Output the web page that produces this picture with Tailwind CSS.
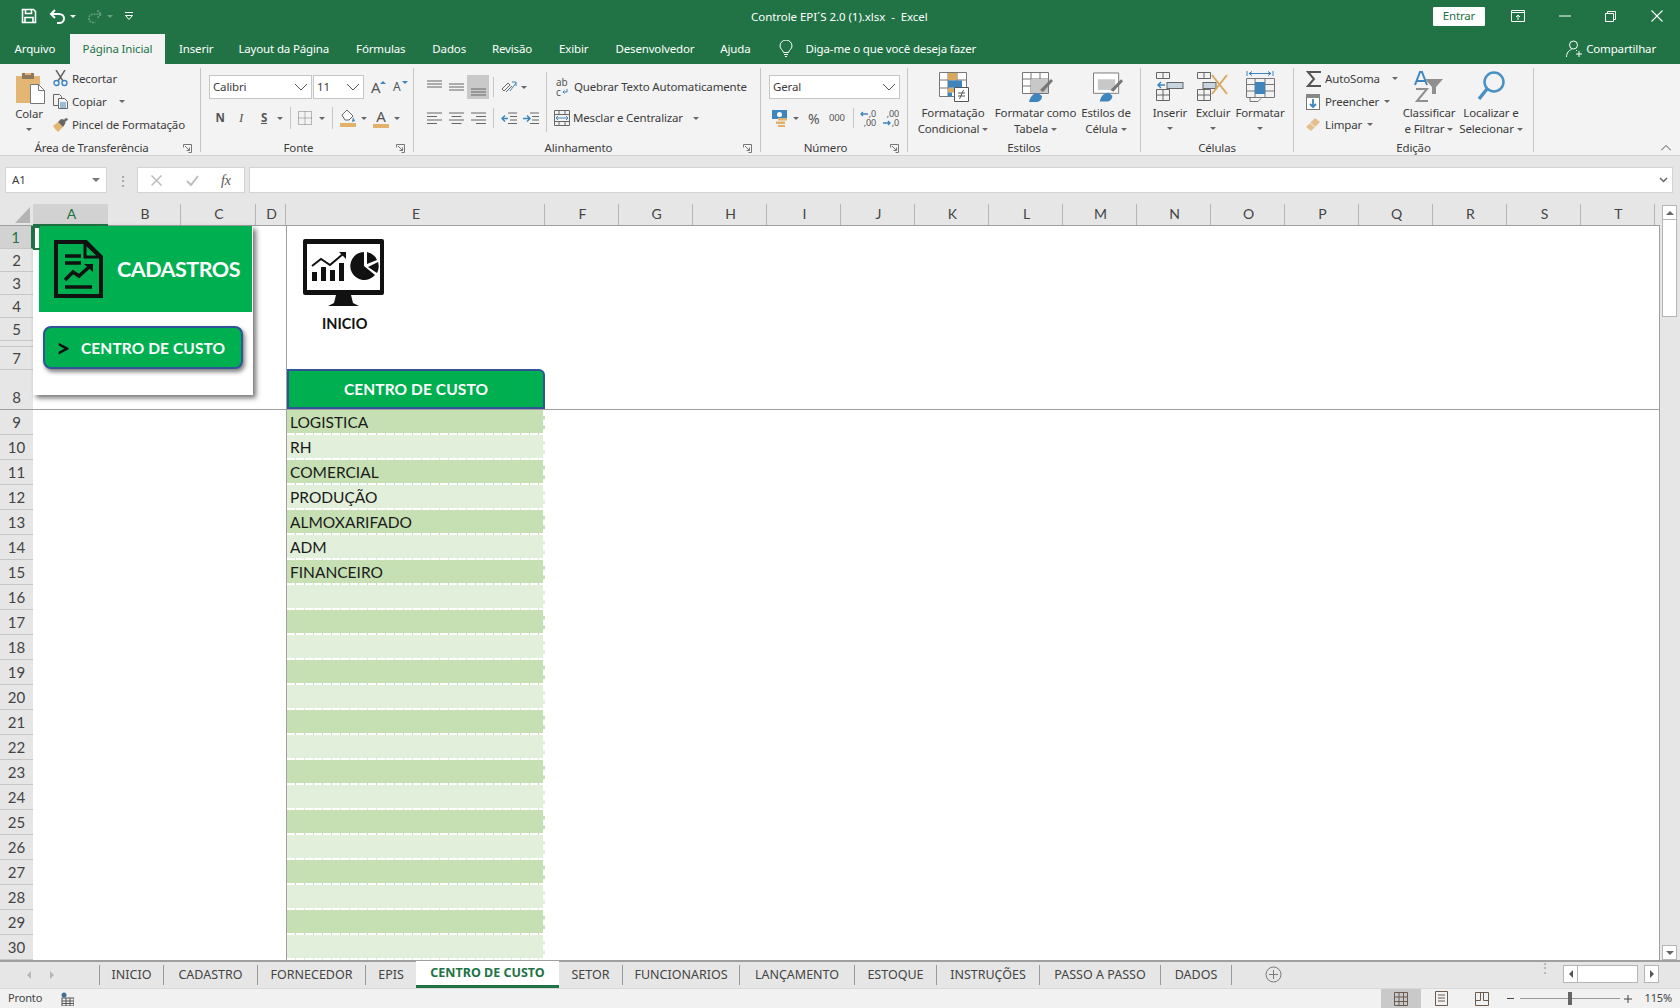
<!DOCTYPE html>
<html lang="pt">
<head>
<meta charset="UTF-8" />
<title>Controle EPI'S 2.0 (1).xlsx - Excel</title>
<script src="https://cdn.jsdelivr.net/npm/@tailwindcss/browser@4"></script>
</head>
<body class="w-[1680px] h-[1008px] overflow-hidden flex flex-col bg-white text-[11.5px] tracking-[-0.15px] text-[#3c3c3c] font-['Noto_Sans',sans-serif]">

<!-- barra de titulo -->
<header class="h-[32px] shrink-0 bg-[#217346] text-white flex items-center relative">
  <svg class="ml-[21px]" width="16" height="16" viewBox="0 0 16 16" fill="none" stroke="#fff" stroke-width="1.6"><path d="M1.5 1.5h11l2 2v11h-13z"/><path d="M4.5 1.5v4h6v-4M4 14.5v-5h8v5"/></svg>
  <svg class="ml-[12px]" width="17" height="15" viewBox="0 0 17 15" fill="none" stroke="#fff" stroke-width="2"><path d="M6 1L2 5l4 4"/><path d="M2 5h8c3 0 5 2 5 4.500S13 14 10 14H8"/></svg>
  <i class="ml-[4px] border-x-[3px] border-t-[3px] border-x-transparent border-t-white"></i>
  <svg class="ml-[11px]" width="16" height="15" viewBox="0 0 17 15" fill="none" stroke="#68a285" stroke-width="1.6" stroke-dasharray="2 1"><path d="M11 1l4 4-4 4"/><path d="M15 5H7C4 5 2 7 2 9.500S4 14 7 14h2"/></svg>
  <i class="ml-[4px] border-x-[3px] border-t-[3px] border-x-transparent border-t-[#68a285]"></i>
  <svg class="ml-[11px]" width="10" height="9" viewBox="0 0 10 9" fill="none" stroke="#fff"><path d="M1 .5h8"/><path d="M1.500 3.500L5 7.500l3.500-4z" fill="#217346"/></svg>
  <span class="absolute left-[751px] top-[8px] tracking-[-0.05px] whitespace-pre">Controle EPI´S 2.0 (1).xlsx  -  Excel</span>
  <span class="ml-auto w-[52px] h-[19px] bg-white text-[#217346] rounded-[1px] flex items-center justify-center">Entrar</span>
  <svg class="ml-[26px]" width="14" height="12" viewBox="0 0 14 12" fill="none" stroke="#fff"><path d="M.5.500h13v11H.5zM.5 2.500h13"/><path d="M7 10V5M5 7l2-2 2 2"/></svg>
  <svg class="ml-[34px]" width="12" height="2" viewBox="0 0 12 2" stroke="#fff"><path d="M0 1h12"/></svg>
  <svg class="ml-[34px]" width="11" height="11" viewBox="0 0 11 11" fill="none" stroke="#fff"><path d="M.5 2.500h8v8h-8zM2.500 2.500v-2h8v8h-2"/></svg>
  <svg class="ml-[35px] mr-[17px]" width="12" height="12" viewBox="0 0 12 12" stroke="#fff" stroke-width="1.100"><path d="M.5.500l11 11M11.500.500l-11 11"/></svg>
</header>

<!-- abas do ribbon -->
<nav class="h-[32px] shrink-0 bg-[#217346] text-white flex items-end">
  <span class="h-[30px] w-[70px] flex items-center justify-center">Arquivo</span>
  <span class="h-[30px] w-[95px] bg-[#f3f3f3] text-[#217346] flex items-center justify-center">Página Inicial</span>
  <span class="h-[30px] ml-[14px] flex items-center">Inserir</span>
  <span class="h-[30px] ml-[25px] flex items-center">Layout da Página</span>
  <span class="h-[30px] ml-[27px] flex items-center">Fórmulas</span>
  <span class="h-[30px] ml-[27px] flex items-center">Dados</span>
  <span class="h-[30px] ml-[26px] flex items-center">Revisão</span>
  <span class="h-[30px] ml-[27px] flex items-center">Exibir</span>
  <span class="h-[30px] ml-[27px] flex items-center">Desenvolvedor</span>
  <span class="h-[30px] ml-[26px] flex items-center">Ajuda</span>
  <svg class="ml-[28px] mb-[6px]" width="14" height="18" viewBox="0 0 14 18" fill="none" stroke="#fff"><path d="M4.500 12.500C4 10 1 9 1 6a6 6 0 0 1 12 0c0 3-3 4-3.500 6.500zM5 14.500h4M6 16.500h2"/></svg>
  <span class="h-[30px] ml-[13px] flex items-center">Diga-me o que você deseja fazer</span>
  <svg class="ml-auto mb-[6px]" width="17" height="18" viewBox="0 0 17 18" fill="none" stroke="#fff"><circle cx="7.500" cy="5" r="4"/><path d="M.5 17c0-4 2.500-7 5-7.500M10 10l1 1M13 11v6M10 14h6"/></svg>
  <span class="h-[30px] ml-[3px] mr-[24px] flex items-center">Compartilhar</span>
</nav>

<!-- ribbon -->
<section class="h-[92px] shrink-0 bg-[#f3f3f3] flex border-b border-[#d2d2d2] whitespace-nowrap">

  <!-- area de transferencia -->
  <div class="w-[201px] h-[84px] mt-[4px] shrink-0 border-r border-[#c6c6c6] flex flex-col">
    <div class="h-[72px] shrink-0 flex">
      <div class="ml-[9px] w-[40px] flex flex-col items-center">
        <svg class="mt-[5px] ml-[2px]" width="29" height="31" viewBox="0 0 29 31"><rect x="0" y="3" width="24" height="27" fill="#e3b773"/><rect x="6" y="0" width="12" height="6" fill="#8d7a5e"/><rect x="9" y="0" width="6" height="2" fill="#e3b773"/><path d="M14.500 11.500h8l6 6v13h-14z" fill="#fff" stroke="#777"/><path d="M22.500 11.500v6h6" fill="none" stroke="#777"/></svg>
        <span class="mt-[2px] h-[16px] leading-[16px]">Colar</span>
        <i class="mt-[6px] border-x-[3px] border-t-[3px] border-x-transparent border-t-[#666]"></i>
      </div>
      <div class="ml-[4px] -mt-[1px] flex flex-col">
        <div class="h-[23px] flex items-center gap-[4px]">
          <svg width="15" height="17" viewBox="0 0 15 17" fill="none"><path d="M3 0l7 11M12 0L5 11" stroke="#666" stroke-width="1.500"/><circle cx="3.500" cy="13" r="2.500" stroke="#3f85bd" stroke-width="1.400"/><circle cx="11.500" cy="13" r="2.500" stroke="#3f85bd" stroke-width="1.400"/></svg>
          <span>Recortar</span>
        </div>
        <div class="h-[23px] flex items-center gap-[4px]">
          <svg width="15" height="15" viewBox="0 0 15 15" fill="none" stroke="#666"><path d="M.5.500h6l2 2v9h-8z"/><path d="M5.500 4.500h6l3 3v7h-9z" fill="#f3f3f3"/><path d="M7 9h6M7 11h6M7 13h6" stroke="#3f85bd"/></svg>
          <span>Copiar</span>
          <i class="ml-[8px] border-x-[3px] border-t-[3px] border-x-transparent border-t-[#666]"></i>
        </div>
        <div class="h-[23px] flex items-center gap-[4px]">
          <svg width="15" height="14" viewBox="0 0 15 14"><path d="M0 8l5-4 5 5-5 5-2-2z" fill="#e3b773"/><path d="M5 4l3-3 5 1-1 4-2 3z" fill="#666"/><path d="M11 1l3-1 1 2-2 1z" fill="#666"/></svg>
          <span>Pincel de Formatação</span>
        </div>
      </div>
    </div>
    <div class="h-[16px] shrink-0 leading-[16px] flex"><span class="flex-1 text-center">Área de Transferência</span><span class="w-[17px] flex items-center"><svg width="9" height="9" viewBox="0 0 9 9" fill="none" stroke="#777"><path d="M.5 3.500V.5h8v8h-3M2 2l4.500 4.500M6.500 3.500v3h-3"/></svg></span></div>
  </div>

  <!-- fonte -->
  <div class="w-[213px] h-[84px] mt-[4px] shrink-0 border-r border-[#c6c6c6] flex flex-col">
    <div class="h-[72px] shrink-0 flex flex-col pt-[7px]">
      <div class="h-[24px] flex items-center pl-[8px]">
        <span class="w-[103px] h-[24px] bg-white border border-[#c6c6c6] flex items-center justify-between px-[3px]">Calibri<svg width="14" height="8" viewBox="0 0 14 8" fill="none" stroke="#555"><path d="M1 1l6 6 6-6"/></svg></span>
        <span class="w-[51px] h-[24px] ml-[1px] bg-white border border-[#c6c6c6] flex items-center justify-between px-[3px]">11<svg width="14" height="8" viewBox="0 0 14 8" fill="none" stroke="#555"><path d="M1 1l6 6 6-6"/></svg></span>
        <span class="ml-[7px] text-[15px] leading-[15px] w-[15px] relative text-[#555]">A<i class="absolute right-0 top-[1px] border-x-[3px] border-b-[3px] border-x-transparent border-b-[#3f85bd]"></i></span>
        <span class="ml-[7px] text-[12px] w-[15px] relative text-[#555]">A<i class="absolute right-0 top-[3px] border-x-[3px] border-t-[3px] border-x-transparent border-t-[#3f85bd]"></i></span>
      </div>
      <div class="h-[24px] mt-[7px] flex items-center pl-[12px]">
        <span class="w-[14px] text-center font-bold text-[#555]">N</span>
        <span class="w-[14px] ml-[7px] text-center italic font-['Liberation_Serif',serif] text-[13px] text-[#555]">I</span>
        <span class="w-[14px] ml-[9px] text-center font-bold underline text-[#555]">S</span>
        <i class="ml-[6px] border-x-[3px] border-t-[3px] border-x-transparent border-t-[#666]"></i>
        <i class="ml-[7px] w-px h-[22px] bg-[#c6c6c6]"></i>
        <svg class="ml-[7px]" width="14" height="14" viewBox="0 0 14 14" fill="none" stroke="#777" stroke-dasharray="1 1"><path d="M.5.500h13v13H.5zM7 .5v13M.5 7h13"/></svg>
        <i class="ml-[7px] border-x-[3px] border-t-[3px] border-x-transparent border-t-[#666]"></i>
        <i class="ml-[7px] w-px h-[22px] bg-[#c6c6c6]"></i>
        <svg class="ml-[7px]" width="16" height="18" viewBox="0 0 16 18"><path d="M2 6l5-5 6 6-4 4H5z" fill="#fff" stroke="#666"/><path d="M13 8l2 4-3 1z" fill="#3f85bd"/><rect y="14" width="16" height="4" fill="#e3b26a"/></svg>
        <i class="ml-[5px] border-x-[3px] border-t-[3px] border-x-transparent border-t-[#666]"></i>
        <span class="ml-[6px] w-[16px] text-center text-[15px] leading-[15px] border-b-[4px] border-[#e3b26a] text-[#555]">A</span>
        <i class="ml-[5px] border-x-[3px] border-t-[3px] border-x-transparent border-t-[#666]"></i>
      </div>
    </div>
    <div class="h-[16px] shrink-0 leading-[16px] flex"><span class="flex-1 text-center">Fonte</span><span class="w-[17px] flex items-center"><svg width="9" height="9" viewBox="0 0 9 9" fill="none" stroke="#777"><path d="M.5 3.500V.5h8v8h-3M2 2l4.500 4.500M6.500 3.500v3h-3"/></svg></span></div>
  </div>

  <!-- alinhamento -->
  <div class="w-[347px] h-[84px] mt-[4px] shrink-0 border-r border-[#c6c6c6] flex flex-col">
    <div class="h-[72px] shrink-0 flex">
      <div class="w-[132px] flex flex-col pt-[7px]">
        <div class="h-[24px] flex items-center pl-[13px]">
          <svg class="mb-[6px]" width="15" height="9" viewBox="0 0 15 9" stroke="#666"><path d="M0 1h15M0 4h15M0 7h15"/></svg>
          <svg class="ml-[7px]" width="15" height="9" viewBox="0 0 15 9" stroke="#666"><path d="M0 1h15M0 4h15M0 7h15"/></svg>
          <span class="ml-[3px] w-[22px] h-[24px] bg-[#c9c9c9] flex items-end justify-center pb-[2px]"><svg width="15" height="9" viewBox="0 0 15 9" stroke="#666"><path d="M0 1h15M0 4h15M0 7h15"/></svg></span>
          <i class="ml-[4px] w-px h-[20px] bg-[#c6c6c6]"></i>
          <svg class="ml-[7px]" width="16" height="16" viewBox="0 0 16 16" fill="none" stroke="#666"><path d="M1 10l6-6 2 2-6 6zM5 13l6-6"/><path d="M9 12l6-8M11 3h4v4" stroke="#3f85bd"/></svg>
          <i class="ml-[4px] border-x-[3px] border-t-[3px] border-x-transparent border-t-[#666]"></i>
        </div>
        <div class="h-[24px] mt-[7px] flex items-center pl-[13px]">
          <svg width="15" height="13" viewBox="0 0 15 13" stroke="#666"><path d="M0 1h15M0 4.500h10M0 8h15M0 11.500h10"/></svg>
          <svg class="ml-[7px]" width="15" height="13" viewBox="0 0 15 13" stroke="#666"><path d="M0 1h15M2.500 4.500h10M0 8h15M2.500 11.500h10"/></svg>
          <svg class="ml-[7px]" width="15" height="13" viewBox="0 0 15 13" stroke="#666"><path d="M0 1h15M5 4.500h10M0 8h15M5 11.500h10"/></svg>
          <i class="ml-[7px] w-px h-[20px] bg-[#c6c6c6]"></i>
          <svg class="ml-[7px]" width="16" height="13" viewBox="0 0 16 13" fill="none"><path d="M7 1h9M9 4.500h7M9 8h7M7 11.500h9" stroke="#666"/><path d="M7 6.500H1M4 3.500l-3 3 3 3" stroke="#3f85bd" stroke-width="1.500"/></svg>
          <svg class="ml-[6px]" width="16" height="13" viewBox="0 0 16 13" fill="none"><path d="M7 1h9M9 4.500h7M9 8h7M7 11.500h9" stroke="#666"/><path d="M0 6.500h7M4 3.500l3 3-3 3" stroke="#3f85bd" stroke-width="1.500"/></svg>
        </div>
      </div>
      <i class="w-px h-[60px] mt-[4px] bg-[#c6c6c6]"></i>
      <div class="flex flex-col pt-[7px]">
        <div class="h-[24px] flex items-center pl-[9px]">
          <span class="w-[16px] h-[20px] flex flex-col text-[10px] leading-[10px] text-[#555]">ab<span class="flex">c<svg class="ml-[1px] mt-[2px]" width="6" height="6" viewBox="0 0 6 6" fill="none" stroke="#3f85bd"><path d="M5 0v3H1M2.500 1.500L1 3l1.500 1.500"/></svg></span></span>
          <span class="ml-[2px]">Quebrar Texto Automaticamente</span>
        </div>
        <div class="h-[24px] mt-[7px] flex items-center pl-[7px]">
          <svg width="16" height="16" viewBox="0 0 16 16" fill="none" stroke="#666"><path d="M.5.500h15v15H.5zM.5 4.500h15M.5 11.500h15M5 .5v4M11 .5v4M5 11.500v4M11 11.500v4"/><path d="M2 8h12M4 6L2 8l2 2M12 6l2 2-2 2" stroke="#3f85bd"/></svg>
          <span class="ml-[3px]">Mesclar e Centralizar</span>
          <i class="ml-[10px] border-x-[3px] border-t-[3px] border-x-transparent border-t-[#666]"></i>
        </div>
      </div>
    </div>
    <div class="h-[16px] shrink-0 leading-[16px] flex"><span class="flex-1 text-center">Alinhamento</span><span class="w-[17px] flex items-center"><svg width="9" height="9" viewBox="0 0 9 9" fill="none" stroke="#777"><path d="M.5 3.500V.5h8v8h-3M2 2l4.500 4.500M6.500 3.500v3h-3"/></svg></span></div>
  </div>

  <!-- numero -->
  <div class="w-[147px] h-[84px] mt-[4px] shrink-0 border-r border-[#c6c6c6] flex flex-col">
    <div class="h-[72px] shrink-0 flex flex-col pt-[7px]">
      <div class="h-[24px] flex items-center pl-[8px]">
        <span class="w-[131px] h-[24px] bg-white border border-[#c6c6c6] flex items-center justify-between px-[3px]">Geral<svg width="14" height="8" viewBox="0 0 14 8" fill="none" stroke="#555"><path d="M1 1l6 6 6-6"/></svg></span>
      </div>
      <div class="h-[24px] mt-[7px] flex items-center pl-[11px]">
        <svg width="16" height="17" viewBox="0 0 16 17"><rect width="15" height="9" fill="#3f85bd"/><circle cx="7.500" cy="4.500" r="2.500" fill="#fff"/><rect x="6" y="8" width="9" height="2.500" fill="#e3b26a"/><rect x="4" y="11.500" width="9" height="2.500" fill="#e3b26a"/><rect x="6" y="15" width="7" height="2" fill="#e3b26a"/></svg>
        <i class="ml-[5px] border-x-[3px] border-t-[3px] border-x-transparent border-t-[#666]"></i>
        <span class="ml-[9px] w-[15px] text-[14px] leading-[15px] text-[#555]">%</span>
        <span class="ml-[6px] w-[18px] text-[9.500px] text-[#555]">000</span>
        <i class="ml-[6px] w-px h-[20px] bg-[#c6c6c6]"></i>
        <span class="ml-[6px] w-[16px] flex flex-col text-[9px] leading-[9px] text-[#555] items-end"><span class="flex items-center"><svg class="mr-[1px]" width="8" height="6" viewBox="0 0 8 6" fill="none" stroke="#3f85bd" stroke-width="1.300"><path d="M8 3H1M3 1L1 3l2 2"/></svg>,0</span><span>,00</span></span>
        <span class="ml-[7px] w-[16px] flex flex-col text-[9px] leading-[9px] text-[#555] items-end"><span>,00</span><span class="flex items-center"><svg class="mr-[1px]" width="8" height="6" viewBox="0 0 8 6" fill="none" stroke="#3f85bd" stroke-width="1.300"><path d="M0 3h7M5 1l2 2-2 2"/></svg>,0</span></span>
      </div>
    </div>
    <div class="h-[16px] shrink-0 leading-[16px] flex"><span class="flex-1 text-center">Número</span><span class="w-[17px] flex items-center"><svg width="9" height="9" viewBox="0 0 9 9" fill="none" stroke="#777"><path d="M.5 3.500V.5h8v8h-3M2 2l4.500 4.500M6.500 3.500v3h-3"/></svg></span></div>
  </div>

  <!-- estilos -->
  <div class="w-[233px] h-[84px] mt-[4px] shrink-0 border-r border-[#c6c6c6] flex flex-col">
    <div class="h-[72px] shrink-0 flex pl-[6px] leading-[16px]">
      <div class="w-[78px] flex flex-col items-center">
        <span class="h-[37px] pt-[4px] ml-[2px]"><svg width="30" height="30" viewBox="0 0 30 30"><path d="M.5.500h27v24H.5zM.5 8h27M.5 16h27M9 .5v24M18 .5v24" fill="#fff" stroke="#777"/><rect x="9" y="1" width="9" height="7" fill="#d9a85c"/><rect x="9" y="8.500" width="14" height="7" fill="#3f85bd"/><rect x="9" y="16.500" width="9" height="4" fill="#d9a85c"/><rect x="9" y="20.500" width="4" height="4" fill="#3f85bd"/><path d="M15.500 15.500h14v14h-14z" fill="#fff" stroke="#555"/><path d="M19 21h7M19 24h7M24.500 18l-4 9" stroke="#555" fill="none"/></svg></span>
        <span>Formatação</span>
        <span class="flex items-center gap-[3px]">Condicional<i class="border-x-[3px] border-t-[3px] border-x-transparent border-t-[#666]"></i></span>
      </div>
      <div class="w-[87px] flex flex-col items-center">
        <span class="h-[37px] pt-[4px] ml-[4px]"><svg width="31" height="31" viewBox="0 0 31 31"><path d="M.5.500h26v21H.5zM.5 7h26M.5 14h26M9 .5v21M18 .5v21" fill="#fff" stroke="#777"/><rect x="9" y="7" width="17" height="14" fill="#c8c8c8"/><path d="M18 18L29 7l2 2-10 11z" fill="#777"/><path d="M7 30c1-5 4-9 9-9l4 3c0 4-3 6-6 6z" fill="#3f85bd"/></svg></span>
        <span>Formatar como</span>
        <span class="flex items-center gap-[3px]">Tabela<i class="border-x-[3px] border-t-[3px] border-x-transparent border-t-[#666]"></i></span>
      </div>
      <div class="w-[54px] flex flex-col items-center">
        <span class="h-[37px] pt-[4px] ml-[3px]"><svg width="30" height="31" viewBox="0 0 31 31"><path d="M.5.500h26v21H.5z" fill="#fff" stroke="#777"/><rect x="5" y="7" width="18" height="11" fill="#c8c8c8"/><path d="M18 18L29 7l2 2-10 11z" fill="#777"/><path d="M7 30c1-5 4-9 9-9l4 3c0 4-3 6-6 6z" fill="#3f85bd"/></svg></span>
        <span>Estilos de</span>
        <span class="flex items-center gap-[3px]">Célula<i class="border-x-[3px] border-t-[3px] border-x-transparent border-t-[#666]"></i></span>
      </div>
    </div>
    <div class="h-[16px] shrink-0 leading-[16px] text-center">Estilos</div>
  </div>

  <!-- celulas -->
  <div class="w-[153px] h-[84px] mt-[4px] shrink-0 border-r border-[#c6c6c6] flex flex-col">
    <div class="h-[72px] shrink-0 flex pl-[9px] leading-[16px]">
      <div class="w-[40px] flex flex-col items-center">
        <span class="h-[37px] pt-[4px]"><svg width="28" height="30" viewBox="0 0 28 30" fill="none" stroke="#666"><path d="M.5.500h13v6H.5zM7 .5v6M.5 17.500h13v11H.5zM.5 23h13M7 17.500v11"/><rect x="11" y="10.500" width="16" height="6" fill="#c8d4de"/><path d="M9 13H2M5 10l-3 3 3 3" stroke="#3f85bd" stroke-width="1.500"/></svg></span>
        <span>Inserir</span>
        <i class="mt-[6px] border-x-[3px] border-t-[3px] border-x-transparent border-t-[#666]"></i>
      </div>
      <div class="w-[46px] flex flex-col items-center">
        <span class="h-[37px] pt-[4px]"><svg width="32" height="30" viewBox="0 0 32 30" fill="none" stroke="#666"><path d="M.5.500h13v6H.5zM7 .5v6M.5 17.500h13v11H.5zM.5 23h13M7 17.500v11"/><rect x="6" y="10.500" width="13" height="6" fill="#c8d4de"/><path d="M15 3l15 19M30 3L15 22" stroke="#d9a85c" stroke-width="2"/></svg></span>
        <span>Excluir</span>
        <i class="mt-[6px] border-x-[3px] border-t-[3px] border-x-transparent border-t-[#666]"></i>
      </div>
      <div class="w-[48px] flex flex-col items-center">
        <span class="h-[37px] pt-[2px]"><svg width="29" height="33" viewBox="0 0 29 33" fill="none" stroke="#777"><path d="M1 1v5M27 1v5M3 3.500h22M6 1.500L3 3.500l3 2M22 1.500l3 2-3 2" stroke="#3f85bd"/><path d="M.5 8.500h28v19H.5zM.5 14.500h28M.5 21h28M9 8.500v19M19 8.500v19"/><rect x="9" y="12" width="10" height="12" fill="#3f85bd" stroke="none"/><path d="M4 27.500v4h8l3-3"/></svg></span>
        <span>Formatar</span>
        <i class="mt-[6px] border-x-[3px] border-t-[3px] border-x-transparent border-t-[#666]"></i>
      </div>
    </div>
    <div class="h-[16px] shrink-0 leading-[16px] text-center">Células</div>
  </div>

  <!-- edicao -->
  <div class="w-[240px] h-[84px] mt-[4px] shrink-0 border-r border-[#c6c6c6] flex flex-col">
    <div class="h-[72px] shrink-0 flex leading-[16px]">
      <div class="ml-[12px] -mt-[1px] w-[93px] flex flex-col">
        <div class="h-[23px] flex items-center gap-[4px]">
          <svg width="15" height="16" viewBox="0 0 15 16" fill="none" stroke="#555" stroke-width="2"><path d="M15 1H2l6 7-6 7h13"/></svg>
          <span>AutoSoma</span>
          <i class="ml-[8px] border-x-[3px] border-t-[3px] border-x-transparent border-t-[#666]"></i>
        </div>
        <div class="h-[23px] flex items-center gap-[4px]">
          <svg width="15" height="16" viewBox="0 0 15 16"><rect x=".5" y=".5" width="13" height="15" fill="#fff" stroke="#777"/><rect width="14" height="4" fill="#888"/><path d="M7 5v8M4 10l3 3 3-3" fill="none" stroke="#3f85bd" stroke-width="1.800"/></svg>
          <span>Preencher</span>
          <i class="ml-[1px] border-x-[3px] border-t-[3px] border-x-transparent border-t-[#666]"></i>
        </div>
        <div class="h-[23px] flex items-center gap-[4px]">
          <svg width="15" height="14" viewBox="0 0 15 14"><path d="M0 9l9-9 5 4-9 9z" fill="#e3c08c"/><path d="M4 5l5 4" stroke="#f3f3f3"/></svg>
          <span>Limpar</span>
          <i class="ml-[1px] border-x-[3px] border-t-[3px] border-x-transparent border-t-[#666]"></i>
        </div>
      </div>
      <div class="w-[60px] flex flex-col items-center">
        <span class="h-[37px] pt-[3px]"><svg width="30" height="32" viewBox="0 0 30 32"><path d="M1 14L6 1h2l5 13M3 10h8" fill="none" stroke="#3f85bd" stroke-width="2"/><path d="M2 18h11L3 30h11" fill="none" stroke="#8f8f8f" stroke-width="2"/><path d="M11 8h18l-7 8v7h-4v-7z" fill="#8f8f8f"/></svg></span>
        <span>Classificar</span>
        <span class="flex items-center gap-[3px]">e Filtrar<i class="border-x-[3px] border-t-[3px] border-x-transparent border-t-[#666]"></i></span>
      </div>
      <div class="w-[64px] flex flex-col items-center">
        <span class="h-[37px] pt-[3px]"><svg width="28" height="31" viewBox="0 0 28 31" fill="none" stroke="#4a90c4"><circle cx="17" cy="11" r="9.500" stroke-width="2.500"/><path d="M10 18l-8 10" stroke-width="3.500"/></svg></span>
        <span>Localizar e</span>
        <span class="flex items-center gap-[3px]">Selecionar<i class="border-x-[3px] border-t-[3px] border-x-transparent border-t-[#666]"></i></span>
      </div>
    </div>
    <div class="h-[16px] shrink-0 leading-[16px] text-center">Edição</div>
  </div>

  <div class="flex-1 flex items-end justify-end pr-[9px] pb-[4px]"><svg width="10" height="6" viewBox="0 0 10 6" fill="none" stroke="#555"><path d="M0 5.500l5-5 5 5"/></svg></div>
</section>

<!-- barra de formulas -->
<div class="h-[48px] shrink-0 bg-[#e6e6e6] flex pt-[11px] pb-[11px] pl-[5px]">
  <div class="w-[102px] bg-white border border-[#d4d4d4] flex items-center justify-between px-[6px]"><span>A1</span><i class="border-x-[4px] border-t-[4px] border-x-transparent border-t-[#777]"></i></div>
  <div class="w-[30px] text-[#999] flex items-center justify-center tracking-[-1px] leading-[5px] text-[14px]">⋮</div>
  <div class="w-[108px] bg-white border border-[#d4d4d4] flex items-center pl-[13px]">
    <svg width="11" height="11" viewBox="0 0 11 11" stroke="#bdbdbd" stroke-width="1.500"><path d="M.5.500l10 10M10.500.500l-10 10"/></svg>
    <svg class="ml-[24px]" width="13" height="11" viewBox="0 0 13 11" fill="none" stroke="#bdbdbd" stroke-width="2"><path d="M1 6l4 4 7-9"/></svg>
    <span class="ml-[22px] italic font-['Liberation_Serif',serif] text-[14px] text-[#555]">fx</span>
  </div>
  <div class="w-[1424px] ml-[4px] bg-white border border-[#d4d4d4] flex items-center justify-end pr-[4px]"><svg width="9" height="6" viewBox="0 0 9 6" fill="none" stroke="#666" stroke-width="1.500"><path d="M1 1l3.500 3.500L8 1"/></svg></div>
</div>

<!-- area da planilha -->
<main class="h-[756px] shrink-0 flex tracking-normal font-['Lato',sans-serif]">
  <div class="w-[1660px] flex flex-col">
    <!-- cabecalho das colunas -->
    <div id="colHeader" class="h-[22px] shrink-0 flex bg-[#e6e6e6] border-b border-[#9e9e9e] text-[14px] text-[#444] leading-[20px]">
      <div class="w-[33px] flex items-end justify-end pr-[3px] pb-[2px]"><i class="border-b-[16px] border-l-[15px] border-b-[#b4b4b4] border-l-transparent"></i></div>
      <div class="w-[75px] pl-[2px] bg-[#d2d2d2] border-b-2 border-[#217346] h-[22px] text-center text-[#217346]">A</div>
      <div class="w-[73px] pl-[2px] border-r border-[#b5b5b5] text-center">B</div>
      <div class="w-[75px] pl-[2px] border-r border-[#b5b5b5] text-center">C</div>
      <div class="w-[30px] pl-[2px] border-r border-[#b5b5b5] text-center">D</div>
      <div class="w-[259px] pl-[2px] border-r border-[#b5b5b5] text-center">E</div>
    </div>

    <!-- painel congelado -->
    <div class="h-[184px] shrink-0 flex border-b border-[#a0a0a0]">
      <div class="w-[33px] bg-[#e6e6e6] shrink-0 flex flex-col text-[15px] text-[#444] text-center leading-[22px]">
        <div class="h-[23px] bg-[#d2d2d2] border-b border-r-2 border-b-[#c6c6c6] border-r-[#217346] text-[#217346]">1</div>
        <div class="h-[23px] border-b border-[#c6c6c6]">2</div>
        <div class="h-[23px] border-b border-[#c6c6c6]">3</div>
        <div class="h-[23px] border-b border-[#c6c6c6]">4</div>
        <div class="h-[23px] border-b border-[#c6c6c6]">5</div>
        <div class="h-[6px] border-b border-[#c6c6c6]"></div>
        <div class="h-[23px] border-b border-[#c6c6c6]">7</div>
        <div class="h-[40px] pb-[1px] flex items-end justify-center">8</div>
      </div>
      <div class="w-[253px] shrink-0 relative">
        <!-- cursor da celula A1 -->
        <div class="absolute left-0 top-0 w-[7px] h-[24px] border-2 border-r-0 border-[#217346] z-10"></div>
        <div class="w-[220px] h-[169px] bg-white shadow-[3px_3px_5px_rgba(0,0,0,0.55)]">
          <div class="ml-[6px] w-[213px] h-[86px] bg-[#00b050] flex items-center">
            <svg class="ml-[15px]" width="49" height="58" viewBox="0 0 49 58"><path d="M2 2h30l15 15v39H2z" fill="none" stroke="#111" stroke-width="4"/><path d="M31 3v14h15z" fill="#00b050" stroke="#111" stroke-width="3"/><path d="M11 16h16M11 23h16M11 47h27" stroke="#111" stroke-width="3.500"/><path d="M11 40l8-8 6 4 10-9" fill="none" stroke="#111" stroke-width="3.500"/><path d="M30 24h9v8z" fill="#111"/></svg>
            <span class="ml-[14px] text-[21.5px] font-bold text-white tracking-[-0.5px]">CADASTROS</span>
          </div>
          <div class="ml-[10px] mt-[14px] w-[200px] h-[43px] bg-[#00b050] border-2 border-[#2f5597] rounded-[8px] shadow-[2px_3px_4px_rgba(0,0,0,0.5)] flex items-center">
            <span class="ml-[11px] w-[14px] text-[25px] font-bold text-[#111] leading-none">&gt;</span>
            <span class="ml-[11px] pt-[2px] text-[15.5px] font-bold text-white tracking-[0.1px]">CENTRO DE CUSTO</span>
          </div>
        </div>
      </div>
      <div class="w-[259px] shrink-0 border-l border-[#a0a0a0] flex flex-col">
        <svg class="ml-[16px] mt-[13px]" width="81" height="67" viewBox="0 0 81 67"><path d="M0 2a2 2 0 0 1 2-2h77a2 2 0 0 1 2 2v52a2 2 0 0 1-2 2H2a2 2 0 0 1-2-2z" fill="#111"/><rect x="4" y="5" width="73" height="46" fill="#fff"/><path d="M33 56h15l2 8 6 3H25l6-3z" fill="#111"/><rect x="9" y="33" width="5" height="9" fill="#111"/><rect x="18" y="28" width="5" height="14" fill="#111"/><rect x="27" y="31" width="5" height="11" fill="#111"/><rect x="36" y="24" width="5" height="18" fill="#111"/><path d="M9 27l9-7 9 6 13-11" fill="none" stroke="#111" stroke-width="2"/><path d="M36 13h7v7z" fill="#111"/><path d="M61 13a14 14 0 1 0 11 23l-11-9z" fill="#111"/><path d="M64 13a14 14 0 0 1 10 8l-10 4zM65 28l10-5a14 14 0 0 1-1 11z" fill="#111"/></svg>
        <span class="mt-[9px] ml-[35px] text-[14.5px] font-bold text-[#111] leading-[18px]">INICIO</span>
        <div class="mt-auto w-[258px] h-[40px] pt-[2px] bg-[#00b050] border-2 border-[#2f5597] rounded-tr-[6px] flex items-center justify-center text-[15.5px] font-bold text-white tracking-[0.1px]">CENTRO DE CUSTO</div>
      </div>
      <div class="flex-1 border-r border-[#a0a0a0]"></div>
    </div>

    <!-- linhas 9 a 30 -->
    <div class="flex-1 min-h-0 flex overflow-hidden">
      <div id="rowHeaders" class="w-[33px] bg-[#e6e6e6] shrink-0 text-[15px] text-[#444] text-center"></div>
      <div class="w-[253px] shrink-0"></div>
      <div id="rows" class="w-[259px] shrink-0 border-l border-[#a0a0a0] text-[15.5px] text-[#1a1a1a]"></div>
      <div class="flex-1 border-r border-[#a0a0a0]"></div>
    </div>
  </div>

  <!-- barra de rolagem vertical -->
  <div class="w-[20px] pt-[1px] pl-[2px] pr-[3px] flex flex-col bg-[#e6e6e6]">
    <div class="h-[15px] bg-white border border-[#b5b5b5] flex items-center justify-center"><i class="border-x-[4px] border-b-[4px] border-x-transparent border-b-[#666]"></i></div>
    <div class="h-[97px] bg-white border-x border-b border-[#b5b5b5]"></div>
    <div class="flex-1"></div>
    <div class="h-[15px] bg-white border border-[#b5b5b5] flex items-center justify-center"><i class="border-x-[4px] border-t-[4px] border-x-transparent border-t-[#666]"></i></div>
  </div>
</main>

<!-- abas das planilhas -->
<footer class="h-[28px] shrink-0 bg-[#e6e6e6] border-t-2 border-[#a0a0a0] flex items-start text-[12.5px] tracking-normal text-[#444] whitespace-nowrap">
  <div class="w-[100px] h-[20px] mt-[3px] border-r border-[#999] flex items-center pl-[27px] gap-[19px]">
    <i class="border-y-[4px] border-r-[4px] border-y-transparent border-r-[#b5b5b5]"></i>
    <i class="border-y-[4px] border-l-[4px] border-y-transparent border-l-[#b5b5b5]"></i>
  </div>
  <span class="w-[64px] h-[20px] mt-[3px] border-r border-[#999] flex items-center justify-center">INICIO</span>
  <span class="w-[94px] h-[20px] mt-[3px] border-r border-[#999] flex items-center justify-center">CADASTRO</span>
  <span class="w-[108px] h-[20px] mt-[3px] border-r border-[#999] flex items-center justify-center">FORNECEDOR</span>
  <span class="w-[50px] h-[20px] mt-[3px] flex items-center justify-center">EPIS</span>
  <span class="w-[143px] h-[27px] -mt-[1px] bg-white border-b-[3px] border-[#217346] text-[#217346] font-bold flex items-center justify-center">CENTRO DE CUSTO</span>
  <span class="w-[64px] h-[20px] mt-[3px] border-r border-[#999] flex items-center justify-center">SETOR</span>
  <span class="w-[117px] h-[20px] mt-[3px] border-r border-[#999] flex items-center justify-center">FUNCIONARIOS</span>
  <span class="w-[115px] h-[20px] mt-[3px] border-r border-[#999] flex items-center justify-center">LANÇAMENTO</span>
  <span class="w-[82px] h-[20px] mt-[3px] border-r border-[#999] flex items-center justify-center">ESTOQUE</span>
  <span class="w-[103px] h-[20px] mt-[3px] border-r border-[#999] flex items-center justify-center">INSTRUÇÕES</span>
  <span class="w-[121px] h-[20px] mt-[3px] border-r border-[#999] flex items-center justify-center">PASSO A PASSO</span>
  <span class="w-[71px] h-[20px] mt-[3px] border-r border-[#999] flex items-center justify-center">DADOS</span>
  <svg class="ml-[33px] mt-[4px]" width="17" height="17" viewBox="0 0 17 17" fill="none" stroke="#777"><circle cx="8.500" cy="8.500" r="7.500"/><path d="M8.500 4v9M4 8.500h9"/></svg>
  <span class="ml-[256px] mt-[3px] text-[#aaa] leading-[5px] text-[14px]">⋮</span>
  <div class="ml-[11px] mt-[3px] flex items-stretch h-[18px]">
    <span class="w-[15px] bg-white border border-[#b5b5b5] flex items-center justify-center"><i class="border-y-[4px] border-r-[4px] border-y-transparent border-r-[#555]"></i></span>
    <span class="w-[60px] bg-white border-y border-r border-[#b5b5b5]"></span>
    <span class="w-[15px] ml-[6px] bg-white border border-[#b5b5b5] flex items-center justify-center"><i class="border-y-[4px] border-l-[4px] border-y-transparent border-l-[#555]"></i></span>
  </div>
</footer>

<!-- barra de status -->
<div class="h-[20px] shrink-0 bg-[#f1f1f1] flex items-center text-[11px] text-[#444] border-t border-[#d8d8d8]">
  <span class="ml-[8px]">Pronto</span>
  <svg class="ml-[19px]" width="13" height="14" viewBox="0 0 13 14"><circle cx="3" cy="3" r="2.500" fill="#3f6f96"/><rect x="1" y="6" width="12" height="8" fill="none" stroke="#555"/><path d="M1 9h12M1 11.500h12M5 6v8M9 6v8" stroke="#555"/></svg>
  <span class="ml-auto w-[40px] h-[19px] bg-[#c9c9c9] flex items-center justify-center"><svg width="14" height="14" viewBox="0 0 14 14" fill="none" stroke="#6b5a4e"><path d="M.5.500h13v13H.5zM.5 5h13M.5 9.500h13M5 .5v13M9.500.5v13"/></svg></span>
  <svg class="ml-[14px]" width="13" height="15" viewBox="0 0 13 15" fill="none" stroke="#6b5a4e"><path d="M.5.500h12v14H.5zM3 4h7M3 7h7M3 10h7"/></svg>
  <svg class="ml-[27px]" width="14" height="14" viewBox="0 0 14 14" fill="none" stroke="#6b5a4e"><path d="M.5.500h13v13H.5zM.5 8.500h5M8.500 8.500h5M5.500.5v8M8.500.5v8"/></svg>
  <span class="ml-[18px] w-[7px] h-px bg-[#444]"></span>
  <span class="ml-[6px] w-[100px] h-px bg-[#999] relative"><i class="absolute left-[48px] -top-[6px] w-[4px] h-[13px] bg-[#666]"></i></span>
  <svg class="ml-[4px]" width="8" height="8" viewBox="0 0 8 8" stroke="#444"><path d="M0 4h8M4 0v8"/></svg>
  <span class="ml-[13px] mr-[8px]">115%</span>
</div>

<script>
  // cabecalho das colunas F ate T
  const colHeader = document.getElementById("colHeader");
  "FGHIJKLMNOPQRST".split("").forEach(letter => {
    const col = document.createElement("div");
    col.className = "w-[74px] pl-[2px] border-r border-[#b5b5b5] text-center";
    col.textContent = letter;
    colHeader.appendChild(col);
  });

  // linhas 9 a 30
  const centros = ["LOGISTICA", "RH", "COMERCIAL", "PRODUÇÃO", "ALMOXARIFADO", "ADM", "FINANCEIRO"];
  const rowHeaders = document.getElementById("rowHeaders");
  const rows = document.getElementById("rows");
  for (let n = 9; n <= 30; n++) {
    const head = document.createElement("div");
    head.className = "h-[25px] border-b border-[#c6c6c6] leading-[25px]";
    head.textContent = n;
    rowHeaders.appendChild(head);

    const row = document.createElement("div");
    row.className = n % 2 ? "h-[25px] w-[258px] border-r-2 border-dashed border-white bg-[#c6e0b4]" : "h-[25px] w-[258px] border-r-2 border-dashed border-white bg-[#e2efda]";
    row.innerHTML = `<div class="h-[23px] pl-[3px] leading-[24px]">${centros[n - 9] || ""}</div><div class="h-[2px] bg-[repeating-linear-gradient(90deg,#fff_0,#fff_8px,transparent_8px,transparent_9px)]"></div>`;
    rows.appendChild(row);
  }
</script>
</body>
</html>
